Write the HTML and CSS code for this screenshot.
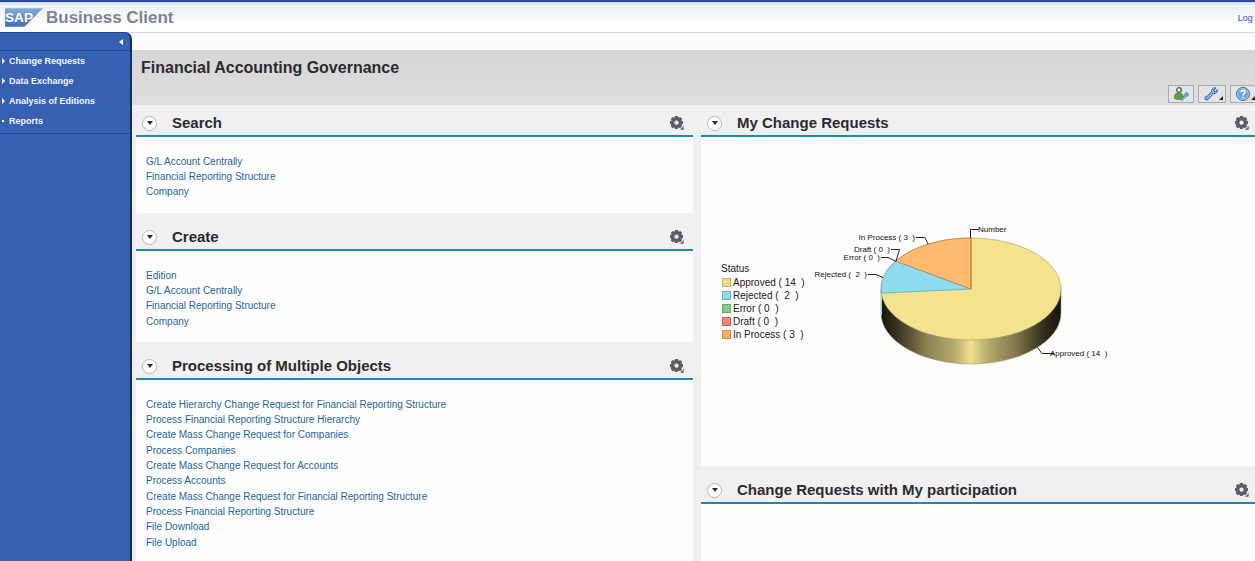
FILE: index.html
```html
<!DOCTYPE html>
<html lang="en">
<head>
<meta charset="utf-8">
<title>Business Client</title>
<link rel="stylesheet" href="styles.css">
</head>
<body>
<svg class="defs" aria-hidden="true">
  <symbol id="gear" viewBox="0 0 14 14">
    <path d="M5 0h3l.5 1.8 1.8-.8 1.8 1.8-.7 1.8 1.6.6v2.8l-1.7.7.8 1.6-2 2-1.7-.8-.7 1.6H5l-.6-1.6-1.8.8-1.9-2 .8-1.6L0 8V5.200l1.600-.6-.8-1.800L2.700.900l1.700.800zM6.500 4.500a2.100 2.100 0 1 0 .01 0z" fill="#5c5f62" fill-rule="evenodd"/>
    <path d="M14 9.500V14H9.500z" fill="#5c5f62" stroke="#f0f0f0" stroke-width=".6"/>
  </symbol>
  <symbol id="wrench" viewBox="0 0 16 16">
    <path d="M13.800 1.200 11.300 3.500l.2 1.500 1.500.2 2.200-2.300c.8 2.500-1.200 5-4 4.600L5.300 13.300c-.7 2-3.400 2.200-4.200.4-.8-1.700.8-3.300 2.400-3L8.700 5.200C8.200 2.300 11 .2 13.800 1.200z" fill="#7db4dc" stroke="#2f6496" stroke-width="1.100"/>
  </symbol>
</svg>
<header class="banner">
  <div class="brand">
    <svg class="logo" viewBox="0 0 40 20" role="img" aria-label="SAP">
      <defs><linearGradient id="sap" x1="0" y1="0" x2="0" y2="1"><stop offset="0" stop-color="#86aad4"/><stop offset="1" stop-color="#3f70b4"/></linearGradient></defs>
      <path d="M0 0h39L20 19H0z" fill="url(#sap)"/>
      <text class="logo-text" x="0" y="14">SAP</text>
    </svg>
    <span class="product">Business Client</span>
  </div>
  <a class="logoff" href="#">Log Off</a>
</header>
<div class="shell">
  <nav class="side">
    <div class="side-head"><button class="collapse" aria-label="Collapse navigation"></button></div>
    <ul class="menu">
      <li><a class="branch" href="#">Change Requests</a></li>
      <li><a class="branch" href="#">Data Exchange</a></li>
      <li><a class="branch" href="#">Analysis of Editions</a></li>
      <li><a class="leaf" href="#">Reports</a></li>
    </ul>
  </nav>
  <main class="work">
    <div class="title-bar">
      <h1>Financial Accounting Governance</h1>
      <div class="tools">
        <button class="tool" aria-label="Personalize">
          <svg width="16" height="16" viewBox="0 0 16 16"><circle cx="6" cy="4" r="2.300" fill="#eee" stroke="#555" stroke-width="1.300"/><path d="M1.500 12.500V10C1.500 7.500 3.500 7 6 7s4 1 4 3v2.500c-2 1.400-6.500 1.400-8.500 0z" fill="#62a03a" stroke="#477a2a" stroke-width=".6"/><use href="#wrench" x="7" y="6" width="9" height="9"/></svg>
        </button>
        <button class="tool wide" aria-label="Settings">
          <svg width="16" height="16"><use href="#wrench" x="1" y="1" width="14" height="14"/></svg>
        </button>
        <button class="tool wide" aria-label="Help">
          <svg width="16" height="16" viewBox="0 0 16 16"><circle cx="8" cy="8" r="6.500" fill="#6aa7d8" stroke="#356b9d" stroke-width="1"/><circle cx="8" cy="8" r="5.500" fill="none" stroke="#b9d8ee" stroke-width=".8"/><path d="M6 6.300c0-2.700 4.100-2.500 4.100-.1C10.100 7.700 8 7.700 8 9.500M8 10.700v1.500" fill="none" stroke="#fff" stroke-width="1.500"/></svg>
        </button>
      </div>
    </div>
    <div class="columns">
      <div class="column">
        <section class="tray">
          <header class="tray-head"><button class="toggle" aria-label="Toggle Search"></button><h2>Search</h2><button class="gear" aria-label="Search settings"><svg width="14" height="14"><use href="#gear"/></svg></button></header>
          <ul class="links">
            <li><a href="#">G/L Account Centrally</a></li>
            <li><a href="#">Financial Reporting Structure</a></li>
            <li><a href="#">Company</a></li>
          </ul>
        </section>
        <section class="tray">
          <header class="tray-head"><button class="toggle" aria-label="Toggle Create"></button><h2>Create</h2><button class="gear" aria-label="Create settings"><svg width="14" height="14"><use href="#gear"/></svg></button></header>
          <ul class="links">
            <li><a href="#">Edition</a></li>
            <li><a href="#">G/L Account Centrally</a></li>
            <li><a href="#">Financial Reporting Structure</a></li>
            <li><a href="#">Company</a></li>
          </ul>
        </section>
        <section class="tray grow">
          <header class="tray-head"><button class="toggle" aria-label="Toggle Processing"></button><h2>Processing of Multiple Objects</h2><button class="gear" aria-label="Processing settings"><svg width="14" height="14"><use href="#gear"/></svg></button></header>
          <ul class="links">
            <li><a href="#">Create Hierarchy Change Request for Financial Reporting Structure</a></li>
            <li><a href="#">Process Financial Reporting Structure Hierarchy</a></li>
            <li><a href="#">Create Mass Change Request for Companies</a></li>
            <li><a href="#">Process Companies</a></li>
            <li><a href="#">Create Mass Change Request for Accounts</a></li>
            <li><a href="#">Process Accounts</a></li>
            <li><a href="#">Create Mass Change Request for Financial Reporting Structure</a></li>
            <li><a href="#">Process Financial Reporting Structure</a></li>
            <li><a href="#">File Download</a></li>
            <li><a href="#">File Upload</a></li>
          </ul>
        </section>
      </div>
      <div class="column">
        <section class="tray">
          <header class="tray-head"><button class="toggle" aria-label="Toggle My Change Requests"></button><h2>My Change Requests</h2><button class="gear" aria-label="My Change Requests settings"><svg width="14" height="14"><use href="#gear"/></svg></button></header>
          <div class="chart">
            <div class="legend">
              <span>Status</span>
              <ul>
                <li><i class="key approved"></i>Approved ( 14&nbsp; )</li>
                <li><i class="key rejected"></i>Rejected (&nbsp; 2&nbsp; )</li>
                <li><i class="key error"></i>Error ( 0&nbsp; )</li>
                <li><i class="key draft"></i>Draft ( 0&nbsp; )</li>
                <li><i class="key process"></i>In Process ( 3&nbsp; )</li>
              </ul>
            </div>
            <svg class="pie" width="300" height="150" viewBox="811 220 300 150" role="img" aria-label="Change requests by status">
              <defs>
                <linearGradient id="rim" x1="0" x2="1">
                  <stop offset="0" stop-color="#15140c"/><stop offset=".09" stop-color="#37331f"/><stop offset=".26" stop-color="#8d8354"/><stop offset=".4" stop-color="#b3a76c"/><stop offset=".5" stop-color="#efe08f"/><stop offset=".6" stop-color="#b3a76c"/><stop offset=".74" stop-color="#857b4d"/><stop offset=".9" stop-color="#34301c"/><stop offset="1" stop-color="#15140c"/>
                </linearGradient>
              </defs>
              <path d="M881 289v24a90 51 0 0 0 180 0v-24z" fill="url(#rim)" stroke="#a59a5e" stroke-width=".6"/>
              <path d="M881.500 293v22" stroke="#8edcf0"/>
              <ellipse cx="971" cy="289" rx="90" ry="51" fill="#f3e38f" stroke="#a59a5e" stroke-width=".6"/>
              <path d="M971 289 881.300 293.200A90 51 0 0 1 895.700 261.100z" fill="#8fdcee" stroke="#5d9fb0" stroke-width=".7"/>
              <path d="M971 289 895.700 261.100A90 51 0 0 1 971 238z" fill="#ffbb70" stroke="#bb7c3c" stroke-width=".7"/>
              <path d="M971 289V238" stroke="#c17f33"/>
              <path d="M970.500 238v-8.500h8M916 237.500h9l3 6.500M891 249.500h8.500L896 261M881 257.500h7l8 4M868 274.500h8l7 3M1037 347l5 6.500h12" fill="none" stroke="#222"/>
              <g class="labels">
                <text x="978" y="232">Number</text>
                <g text-anchor="end">
                  <text x="915" y="240">In Process ( 3&#160; )</text>
                  <text x="890" y="252">Draft ( 0&#160; )</text>
                  <text x="880" y="260">Error ( 0&#160; )</text>
                  <text x="867" y="277">Rejected (&#160; 2&#160; )</text>
                </g>
                <text x="1050" y="356">Approved ( 14&#160; )</text>
              </g>
            </svg>
          </div>
        </section>
        <section class="tray grow">
          <header class="tray-head"><button class="toggle" aria-label="Toggle participation"></button><h2>Change Requests with My participation</h2><button class="gear" aria-label="Participation settings"><svg width="14" height="14"><use href="#gear"/></svg></button></header>
        </section>
      </div>
    </div>
  </main>
</div>
</body>
</html>
```

FILE: styles.css
```css
* { box-sizing: border-box; }
body {
  margin: 0;
  min-height: 100vh;
  display: flex;
  flex-direction: column;
  overflow: hidden;
  background: #fafbfd;
  font-family: "Liberation Sans", Arial, sans-serif;
  color: #2b2b2e;
}
h1, h2, ul { margin: 0; padding: 0; }
ul { list-style: none; }
a { text-decoration: none; white-space: nowrap; }
button { padding: 0; border: 0; background: none; }
svg { display: block; flex: none; }
.defs { display: none; }

.banner {
  display: flex;
  justify-content: space-between;
  align-items: center;
  height: 33px;
  padding: 2px 0 0 5px;
  margin-right: -12px;
  border-top: 2px solid #2548a0;
  border-bottom: 1px solid #d3d5d8;
  background: linear-gradient(#cfdeea, #eef3f7 4px, #f5f7fa 12px, #ffffff 26px);
}
.brand { display: flex; align-items: center; gap: 2px; }
.logo { width: 39px; height: 20px; }
.logo-text { font: bold 14px "Liberation Sans", Arial, sans-serif; fill: #fff; }
.product { font-size: 17px; font-weight: bold; line-height: 20px; color: #7e858c; }
.logoff { font-size: 9px; color: #3a4ab8; }

.shell { display: flex; flex: 1; }
.side {
  flex: none;
  width: 132px;
  margin-top: -1px;
  border-right: 2px solid #182f5e;
  border-top: 1px solid #23488f;
  border-top-right-radius: 7px;
  background: #375fb2;
}
.side-head {
  display: flex;
  justify-content: flex-end;
  align-items: center;
  height: 18px;
  padding-right: 7px;
  border-bottom: 1px solid #234a98;
}
.collapse {
  border: solid transparent;
  border-width: 3px 4px 3px 0;
  border-right-color: #fff;
}
.menu { border-bottom: 1px solid #234a98; padding-bottom: 2px; }
.menu a {
  display: flex;
  align-items: center;
  gap: 4px;
  padding-left: 2px;
  height: 20px;
  font-size: 9px;
  font-weight: bold;
  color: #f2f6ff;
}
.branch::before {
  content: "";
  border: solid transparent;
  border-width: 3px 0 3px 3px;
  border-left-color: #fff;
}
.leaf::before { content: ""; width: 2px; height: 2px; margin-right: 1px; background: #fff; }

.work {
  flex: 1;
  display: flex;
  flex-direction: column;
  margin-right: -3px;
  padding-top: 17px;
}
.title-bar {
  display: flex;
  justify-content: space-between;
  height: 55px;
  padding: 9px 0 0 9px;
  background: linear-gradient(#d6d6d7, #dededf);
}
h1 { font-size: 16px; line-height: 18px; }
.tools { display: flex; align-self: flex-end; gap: 4px; padding-bottom: 2px; }
.tool {
  position: relative;
  display: flex;
  align-items: center;
  justify-content: center;
  width: 26px;
  height: 18px;
  border: 1px solid #a9abad;
  background: #e3e4e5;
}
.wide { width: 28px; padding-right: 3px; }
.wide::after {
  content: "";
  position: absolute;
  right: 2px;
  bottom: 2px;
  border: 2px solid;
  border-color: transparent #222 #222 transparent;
}

.columns {
  flex: 1;
  display: grid;
  grid-template-columns: 1fr 1fr;
  gap: 8px;
  padding-left: 4px;
  background: #f0f0f1;
}
.column { display: flex; flex-direction: column; gap: 6px; }
.tray { background: #fdfdfd; }
.grow { flex: 1; }
.tray-head {
  display: flex;
  align-items: center;
  height: 32px;
  padding: 6px 9px 0 6px;
  border-bottom: 2px solid #2385c0;
  background: #f0f0f1;
}
h2 { flex: 1; padding-left: 15px; font-size: 15px; line-height: 18px; white-space: nowrap; }
.toggle {
  display: grid;
  place-items: center;
  width: 15px;
  height: 15px;
  border: 1px solid #b5b7b9;
  border-radius: 50%;
  background: #fff;
}
.toggle::before {
  content: "";
  border: solid transparent;
  border-width: 4px 3px 0;
  border-top-color: #2b2b2e;
}
.links { padding: 17px 10px 13px; font-size: 10px; line-height: 15px; }
.links li:nth-child(3n) { padding-bottom: 1px; }
.links a { display: block; color: #1f6797; }

.chart { display: flex; padding: 83px 0 96px 20px; }
.legend { width: 90px; padding-top: 42px; font-size: 10px; line-height: 13px; white-space: nowrap; color: #222; }
.legend li { display: flex; align-items: center; gap: 2px; }
.legend ul { padding: 1px 0 0 1px; }
.key { width: 9px; height: 9px; border: 1px solid #0003; }
.approved { background: #f0de84; }
.rejected { background: #8fdcf2; }
.error { background: #85cf85; }
.draft { background: #ff8080; }
.process { background: #ffb060; }
.labels { font-size: 8px; fill: #111; }
```
